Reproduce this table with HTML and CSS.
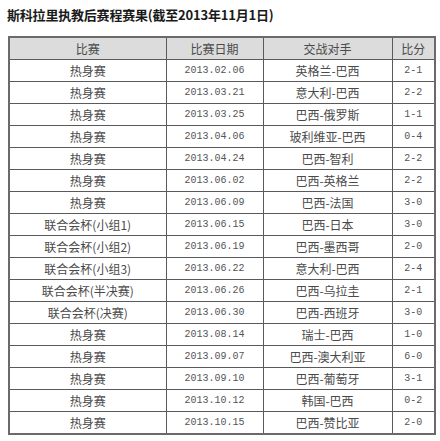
FILE: index.html
```html
<!DOCTYPE html>
<html lang="zh-CN">
<head>
<meta charset="utf-8">
<title>斯科拉里执教后赛程赛果</title>
<link rel="stylesheet" href="styles.css">
</head>
<body>
<div class="page">
  <h1 class="title">斯科拉里执教后赛程赛果(截至2013年11月1日)</h1>
  <table class="sched">
    <colgroup>
      <col class="c1"><col class="c2"><col class="c3"><col class="c4">
    </colgroup>
    <thead>
      <tr><th>比赛</th><th>比赛日期</th><th>交战对手</th><th>比分</th></tr>
    </thead>
    <tbody>
      <tr><td>热身赛</td><td class="num">2013.02.06</td><td>英格兰-巴西</td><td class="num">2-1</td></tr>
      <tr><td>热身赛</td><td class="num">2013.03.21</td><td>意大利-巴西</td><td class="num">2-2</td></tr>
      <tr><td>热身赛</td><td class="num">2013.03.25</td><td>巴西-俄罗斯</td><td class="num">1-1</td></tr>
      <tr><td>热身赛</td><td class="num">2013.04.06</td><td>玻利维亚-巴西</td><td class="num">0-4</td></tr>
      <tr><td>热身赛</td><td class="num">2013.04.24</td><td>巴西-智利</td><td class="num">2-2</td></tr>
      <tr><td>热身赛</td><td class="num">2013.06.02</td><td>巴西-英格兰</td><td class="num">2-2</td></tr>
      <tr><td>热身赛</td><td class="num">2013.06.09</td><td>巴西-法国</td><td class="num">3-0</td></tr>
      <tr><td>联合会杯(小组1)</td><td class="num">2013.06.15</td><td>巴西-日本</td><td class="num">3-0</td></tr>
      <tr><td>联合会杯(小组2)</td><td class="num">2013.06.19</td><td>巴西-墨西哥</td><td class="num">2-0</td></tr>
      <tr><td>联合会杯(小组3)</td><td class="num">2013.06.22</td><td>意大利-巴西</td><td class="num">2-4</td></tr>
      <tr><td>联合会杯(半决赛)</td><td class="num">2013.06.26</td><td>巴西-乌拉圭</td><td class="num">2-1</td></tr>
      <tr><td>联合会杯(决赛)</td><td class="num">2013.06.30</td><td>巴西-西班牙</td><td class="num">3-0</td></tr>
      <tr><td>热身赛</td><td class="num">2013.08.14</td><td>瑞士-巴西</td><td class="num">1-0</td></tr>
      <tr><td>热身赛</td><td class="num">2013.09.07</td><td>巴西-澳大利亚</td><td class="num">6-0</td></tr>
      <tr><td>热身赛</td><td class="num">2013.09.10</td><td>巴西-葡萄牙</td><td class="num">3-1</td></tr>
      <tr><td>热身赛</td><td class="num">2013.10.12</td><td>韩国-巴西</td><td class="num">0-2</td></tr>
      <tr><td>热身赛</td><td class="num">2013.10.15</td><td>巴西-赞比亚</td><td class="num">2-0</td></tr>
    </tbody>
  </table>
</div>
</body>
</html>
```

FILE: styles.css
```css
html, body {
  margin: 0;
  padding: 0;
  background: #ffffff;
}

.page {
  padding: 6px 0 0 8px;
  font-family: "Noto Sans CJK SC", "Noto Sans", sans-serif;
}

.title {
  margin: 0 0 0 -1px;
  height: 18px;
  line-height: 18px;
  font-size: 13px;
  font-weight: bold;
  color: #1a1a1a;
  letter-spacing: -0.2px;
}

.sched {
  margin-top: 12px;
  border-collapse: collapse;
  table-layout: fixed;
  width: 426px;
  border: 2px solid #6a6a6a;
}

.c1 { width: 157px; }
.c2 { width: 97px; }
.c3 { width: 129px; }
.c4 { width: 43px; }

.sched th,
.sched td {
  height: 21px;
  padding: 0;
  border: 1px solid #5a5a5a;
  text-align: center;
  vertical-align: middle;
  font-size: 12px;
  line-height: 14px;
  color: #4a4a4a;
  font-weight: normal;
  white-space: nowrap;
}

.sched th {
  background: #dcdcdc;
  color: #4a4a4a;
}

.sched td.num {
  font-family: "Liberation Mono", "DejaVu Sans Mono", monospace;
  font-size: 10px;
  color: #555555;
}
```
